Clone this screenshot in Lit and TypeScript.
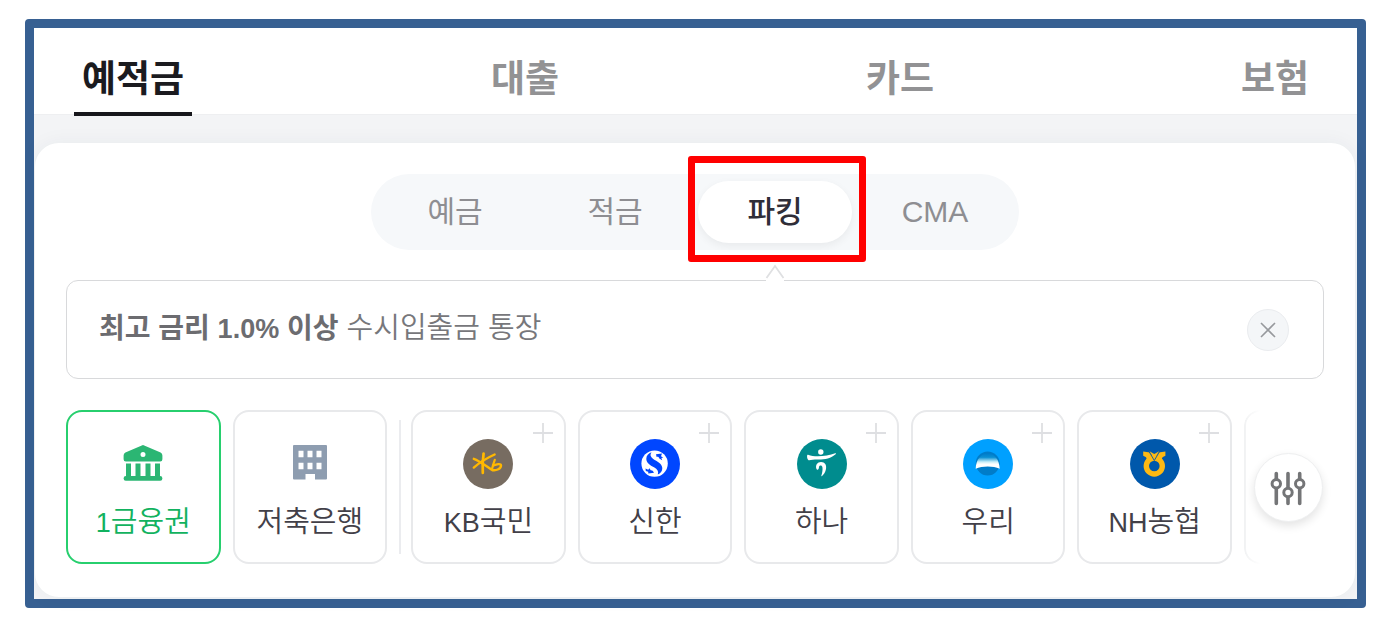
import { LitElement, html, css, svg } from "lit";
import { customElement, state } from "lit/decorators.js";

const bankGlyph = html`<svg class="logo" viewBox="0 0 50 50" aria-hidden="true">
  <path fill="#2bb673" fill-rule="evenodd" d="M23.8 6.4Q25 5.8 26.2 6.4L42.6 13.6Q44.4 14.6 44.4 16.4V20.2Q44.4 22.4 42.2 22.4H7.8Q5.6 22.4 5.6 20.2V16.4Q5.6 14.6 7.4 13.6ZM25 12.9a2.5 2.5 0 1 0 0 5a2.5 2.5 0 1 0 0-5Z"/>
  <path fill="#2bb673" d="M8 24.6H13V37H17.5V24.6H22.5V37H27.5V24.6H32.5V37H37V24.6H42V37Q44.4 37 44.4 39.2V39.6Q44.4 41.8 42.2 41.8H7.8Q5.6 41.8 5.6 39.6V39.2Q5.6 37 8 37Z"/>
</svg>`;

const buildingGlyph = html`<svg class="logo" viewBox="0 0 50 50" aria-hidden="true">
  <path fill="#8e9db0" fill-rule="evenodd" d="M9 6H41Q42 6 42 7V39.500Q42 40.500 41 40.500H30V35H20.500V40.500H9Q8 40.500 8 39.500V7Q8 6 9 6ZM13.500 11.800V18.200H18.500V11.800ZM22.500 11.800V18.200H27.500V11.800ZM31.500 11.800V18.200H36.500V11.800ZM13.500 23.800V30.200H18.500V23.800ZM22.500 23.800V30.200H27.500V23.800ZM31.500 23.800V30.200H36.500V23.800Z"/>
</svg>`;

const kb = svg`<circle cx="25" cy="25" r="25" fill="#776c61"/>
  <g fill="none" stroke="#ffb800" stroke-linecap="round" stroke-linejoin="round">
    <path stroke-width="2.700" d="M20.600 14.500C19.800 20 19.400 28 19.800 33.800"/>
    <path stroke-width="2.400" d="M31.600 15.500C25 18.500 16.500 23.500 10.800 28.600"/>
    <path stroke-width="2.400" d="M10.800 19.800C17 22 23.500 27.500 29.500 31.200C33.500 31.800 38 29.800 38 26.400C37.800 24.300 33.500 25 30.500 26.500"/>
    <path stroke-width="2.200" d="M31.800 20.800C30.800 23.500 29.600 27 29 30.200"/>
  </g>`;

const shinhan = svg`<circle cx="25" cy="25" r="25" fill="#0046ff"/>
  <circle cx="24.600" cy="24.600" r="13.200" fill="#fff"/>
  <path fill="#0046ff" d="M21.500 13.300C19.800 15.500 20.300 18 23.200 20C27 22.500 32 24.500 32.300 29C32.400 32 30.500 34.400 27.800 35.600C28.800 32.500 27.500 30.200 24 28.300C20 26.200 16.300 24 16.300 19.800C16.300 16.800 18.500 14.300 21.500 13.300Z"/>
  <path fill="#0046ff" d="M26 15.200L32 14.600L31 17.200L33.200 18.600L31.400 19.100L32.200 21.200L29.300 19.500C29 18 27.800 17.500 26.600 18Z"/>
  <path fill="#0046ff" d="M15.500 29.500L18.200 30.800L19.600 29.200L20.600 31.200C21.800 31 23.200 31.600 24 33.800L18.300 34.400L18.200 32.800L15.800 32Z"/>`;

const hana = svg`<circle cx="25" cy="25" r="25" fill="#008c8e"/>
  <circle cx="23.800" cy="13" r="2.700" fill="#fff"/>
  <path fill="#fff" d="M10.200 16.200C10.400 15.700 11 15.600 11.600 15.900C17 18.200 30 17.500 38.200 14.200C39 13.900 39.200 14.700 38.600 15.300C34 19.500 27 20.800 20.500 20.600C17 20.600 14 21 12.200 21.300C10.600 21.200 9.700 18 10.200 16.200Z"/>
  <path fill="#fff" d="M19.400 29.800C18.200 26.300 20.400 23 24 23C28 23 29.700 26.200 29 30C28.400 33 26.800 35.700 24.800 37.200C24.300 37.300 24.200 36.900 24.400 36.400C25.400 33.300 25.800 30.500 25.400 28.200C25 26 22.500 26 22 28C21.800 29.200 21.700 30.400 20.800 30.700C20.200 30.900 19.600 30.500 19.400 29.800Z"/>`;

const woori = svg`<defs>
    <linearGradient id="dome" x1="0" y1="0" x2="0" y2="1">
      <stop offset="0" stop-color="#007cc9"/><stop offset="0.250" stop-color="#0a90d4"/>
      <stop offset="0.550" stop-color="#c9eef8"/><stop offset="0.700" stop-color="#fff"/>
    </linearGradient>
  </defs>
  <circle cx="25" cy="25" r="25" fill="#00a0ff"/>
  <circle cx="24.700" cy="24.600" r="12" fill="#007cc9"/>
  <path fill="url(#dome)" d="M12.700 29.800C13 20.500 18 14.500 24.700 14.500S36.400 20.500 36.700 29.800C30 26.800 19.400 26.800 12.700 29.800Z"/>
  <path fill="none" stroke="#00a0ff" stroke-width="1.200" d="M13.300 30.500L16 34M36.100 30.500L33.400 34"/>`;

const nh = svg`<circle cx="25" cy="25" r="25" fill="#0058ab"/>
  <circle cx="24.300" cy="27" r="8" fill="none" stroke="#fdb913" stroke-width="5.400"/>
  <path fill="#fdb913" d="M13.200 12.500L20 13.600L23.600 20.200L20.500 22.500L14.800 22.800C17.500 20.500 17.600 18.500 13.200 16.800Z"/>
  <path fill="#fdb913" d="M35.400 12.500L28.600 13.600L25 20.200L28.100 22.500L33.800 22.800C31.100 20.500 31 18.500 35.400 16.800Z"/>
  <path fill="#fdb913" d="M19.500 12.200L24.300 15L29.100 12.200L24.300 20.500Z"/>
  <path fill="none" stroke="#0058ab" stroke-width="0.900" d="M19.300 13L24.300 21.500L29.300 13"/>`;

const banks = [
  { latin: "KB", name: "국민", art: kb },
  { latin: "", name: "신한", art: shinhan },
  { latin: "", name: "하나", art: hana },
  { latin: "", name: "우리", art: woori },
  { latin: "NH", name: "농협", art: nh },
];

@customElement("app-root")
export class AppRoot extends LitElement {
  @state() private product = "파킹";
  @state() private group = "1금융권";

  static styles = css`
    :host {
      display: block;
      padding: 19px 28px 23px 25px;
      background: #fff;
      color: #424048;
      font-family: "Liberation Sans", "Noto Sans CJK KR", sans-serif;
    }
    * { box-sizing: border-box; }
    button {
      margin: 0;
      padding: 0;
      border: 0;
      background: none;
      color: inherit;
      font: inherit;
      cursor: pointer;
    }
    .frame {
      border: 9px solid #376092;
      border-radius: 4px;
      background: #376092;
    }
    .page { background: #f3f4f6; padding: 0 2px 2px 1px; }
    .top {
      display: flex;
      justify-content: space-between;
      height: 87px;
      margin: 0 -2px 28px -1px;
      padding: 0 40px;
      background: #fff;
      border-bottom: 1px solid #eeeff1;
    }
    .top a {
      height: 88px;
      padding: 24px 8px 0;
      color: #929294;
      font-size: 37px;
      font-weight: 700;
      line-height: 56px;
      text-decoration: none;
    }
    .top a.on { color: #1b1b1f; border-bottom: 4px solid #17171c; }
    .sheet {
      padding: 31px 31px 33px;
      border-radius: 24px;
      background: #fff;
      box-shadow: 0 0 20px rgba(40, 50, 70, 0.05);
    }
    .seg {
      display: flex;
      gap: 6px;
      width: fit-content;
      margin: 0 auto 30px;
      padding: 7px;
      border-radius: 38px;
      background: #f6f8fa;
    }
    .seg button {
      position: relative;
      width: 154px;
      height: 62px;
      border-radius: 31px;
      color: #8e8e92;
      font-size: 30px;
      line-height: 62px;
    }
    .seg button.on {
      background: #fff;
      color: #2f2e38;
      font-weight: 500;
      box-shadow: 0 3px 8px rgba(0, 0, 0, 0.06);
    }
    .mark {
      position: absolute;
      inset: -25px -14px -19px -10px;
      border: 7px solid #f00;
      border-radius: 3px;
      pointer-events: none;
    }
    .caret {
      position: absolute;
      left: 50%;
      top: 83px;
      width: 20px;
      height: 18px;
      margin-left: -10px;
    }
    .notice {
      display: flex;
      align-items: center;
      justify-content: space-between;
      height: 99px;
      margin-bottom: 31px;
      padding: 0 34px 0 32px;
      border: 1px solid #d8d9db;
      border-radius: 12px;
    }
    .notice p {
      margin: 0;
      padding-bottom: 2px;
      color: #77777b;
      font-size: 29px;
      font-weight: 350;
      line-height: 40px;
    }
    .notice b { color: #6c6c70; font-size: 28px; font-weight: 700; }
    .latin { font-size: 27px; }
    .close {
      width: 42px;
      height: 42px;
      border: 1px solid #eaecef;
      border-radius: 50%;
      background: #f4f6f8;
    }
    .close svg { display: block; width: 40px; height: 40px; }
    .rail { display: flex; align-items: center; gap: 12px; }
    .cards { display: flex; flex: 1; min-width: 0; gap: 12px; }
    .card {
      position: relative;
      display: flex;
      flex: 1 1 0;
      min-width: 0;
      flex-direction: column;
      align-items: center;
      gap: 15px;
      padding: 27px 0 21px;
      border: 2px solid #e8e9eb;
      border-radius: 16px;
      font-size: 29px;
      font-weight: 350;
      line-height: 36px;
      white-space: nowrap;
    }
    .card.on { border-color: #27cf6e; color: #12b25f; }
    .logo { display: block; width: 50px; height: 50px; }
    .plus { position: absolute; top: 11px; right: 11px; width: 20px; height: 20px; }
    .split { width: 2px; margin: 10px -2px 10px 0; background: #ebecef; }
    .tail { position: relative; width: 80px; height: 154px; padding: 43px 0 0 10px; }
    .tail::before {
      content: "";
      position: absolute;
      inset: 0 auto 0 0;
      width: 14px;
      border: 2px solid #f1f2f3;
      border-right: 0;
      border-radius: 16px 0 0 16px;
      -webkit-mask-image: linear-gradient(90deg, #000, transparent);
      mask-image: linear-gradient(90deg, #000, transparent);
    }
    .filter {
      position: relative;
      width: 69px;
      height: 69px;
      border: 1px solid #eeeff0;
      border-radius: 50%;
      background: #fff;
      box-shadow: 0 4px 10px rgba(0, 0, 0, 0.11);
    }
    .filter svg { display: block; width: 66px; height: 66px; }
  `;

  private card(name: string, latin: string, text: string, art: unknown, add: boolean) {
    return html`<button
      class="card ${this.group === name ? "on" : ""}"
      aria-pressed=${this.group === name}
      @click=${() => (this.group = name)}
    >
      ${art}
      <span>${latin ? html`<span class="latin">${latin}</span>` : ""}${text}</span>
      ${add
        ? html`<svg class="plus" viewBox="0 0 20 20" aria-hidden="true">
            <path d="M10 0V20M0 10H20" stroke="#dedfe2" stroke-width="1.800" />
          </svg>`
        : ""}
    </button>`;
  }

  render() {
    return html`<div class="frame"><main class="page">
      <nav class="top">
        ${["예적금", "대출", "카드", "보험"].map(
          (t, i) => html`<a href="#" class=${i === 0 ? "on" : ""}>${t}</a>`
        )}
      </nav>
      <section class="sheet">
        <div class="seg">
          ${["예금", "적금", "파킹", "CMA"].map(
            (t) => html`<button class=${this.product === t ? "on" : ""} @click=${() => (this.product = t)}>${t}${this.product === t
              ? html`<svg class="caret" viewBox="0 0 20 18" aria-hidden="true">
                    <path d="M1 14L10 2L19 14V18H1Z" fill="#fff" />
                    <path d="M1.500 14L10 2L18.500 14" fill="none" stroke="#dfe0e2" stroke-width="1.800" />
                  </svg><span class="mark"></span>`
              : ""}</button>`
          )}
        </div>
        <div class="notice">
          <p><b>최고 금리 <span class="latin">1.0%</span> 이상</b> 수시입출금 통장</p>
          <button class="close" aria-label="닫기">
            <svg viewBox="0 0 40 40" aria-hidden="true">
              <path d="M13 13L27 27M27 13L13 27" stroke="#97999d" stroke-width="1.600" />
            </svg>
          </button>
        </div>
        <div class="rail">
          <div class="cards">
            ${this.card("1금융권", "1", "금융권", bankGlyph, false)}
            ${this.card("저축은행", "", "저축은행", buildingGlyph, false)}
            <span class="split"></span>
            ${banks.map((b) =>
              this.card(
                b.latin + b.name,
                b.latin,
                b.name,
                html`<svg class="logo" viewBox="0 0 50 50" aria-hidden="true">${b.art}</svg>`,
                true
              )
            )}
          </div>
          <div class="tail">
            <button class="filter" aria-label="필터">
              <svg viewBox="0 0 66 66" aria-hidden="true">
                <g fill="#fff" stroke="#747577" stroke-width="3.600" stroke-linecap="round">
                  <path d="M21.300 18.500V48.500M33 18.500V48.500M44.700 18.500V48.500" />
                  <circle cx="21.300" cy="28.700" r="4.200" stroke-width="3" />
                  <circle cx="33" cy="37.500" r="4.200" stroke-width="3" />
                  <circle cx="44.700" cy="28.700" r="4.200" stroke-width="3" />
                </g>
              </svg>
            </button>
          </div>
        </div>
      </section>
    </main></div>`;
  }
}
